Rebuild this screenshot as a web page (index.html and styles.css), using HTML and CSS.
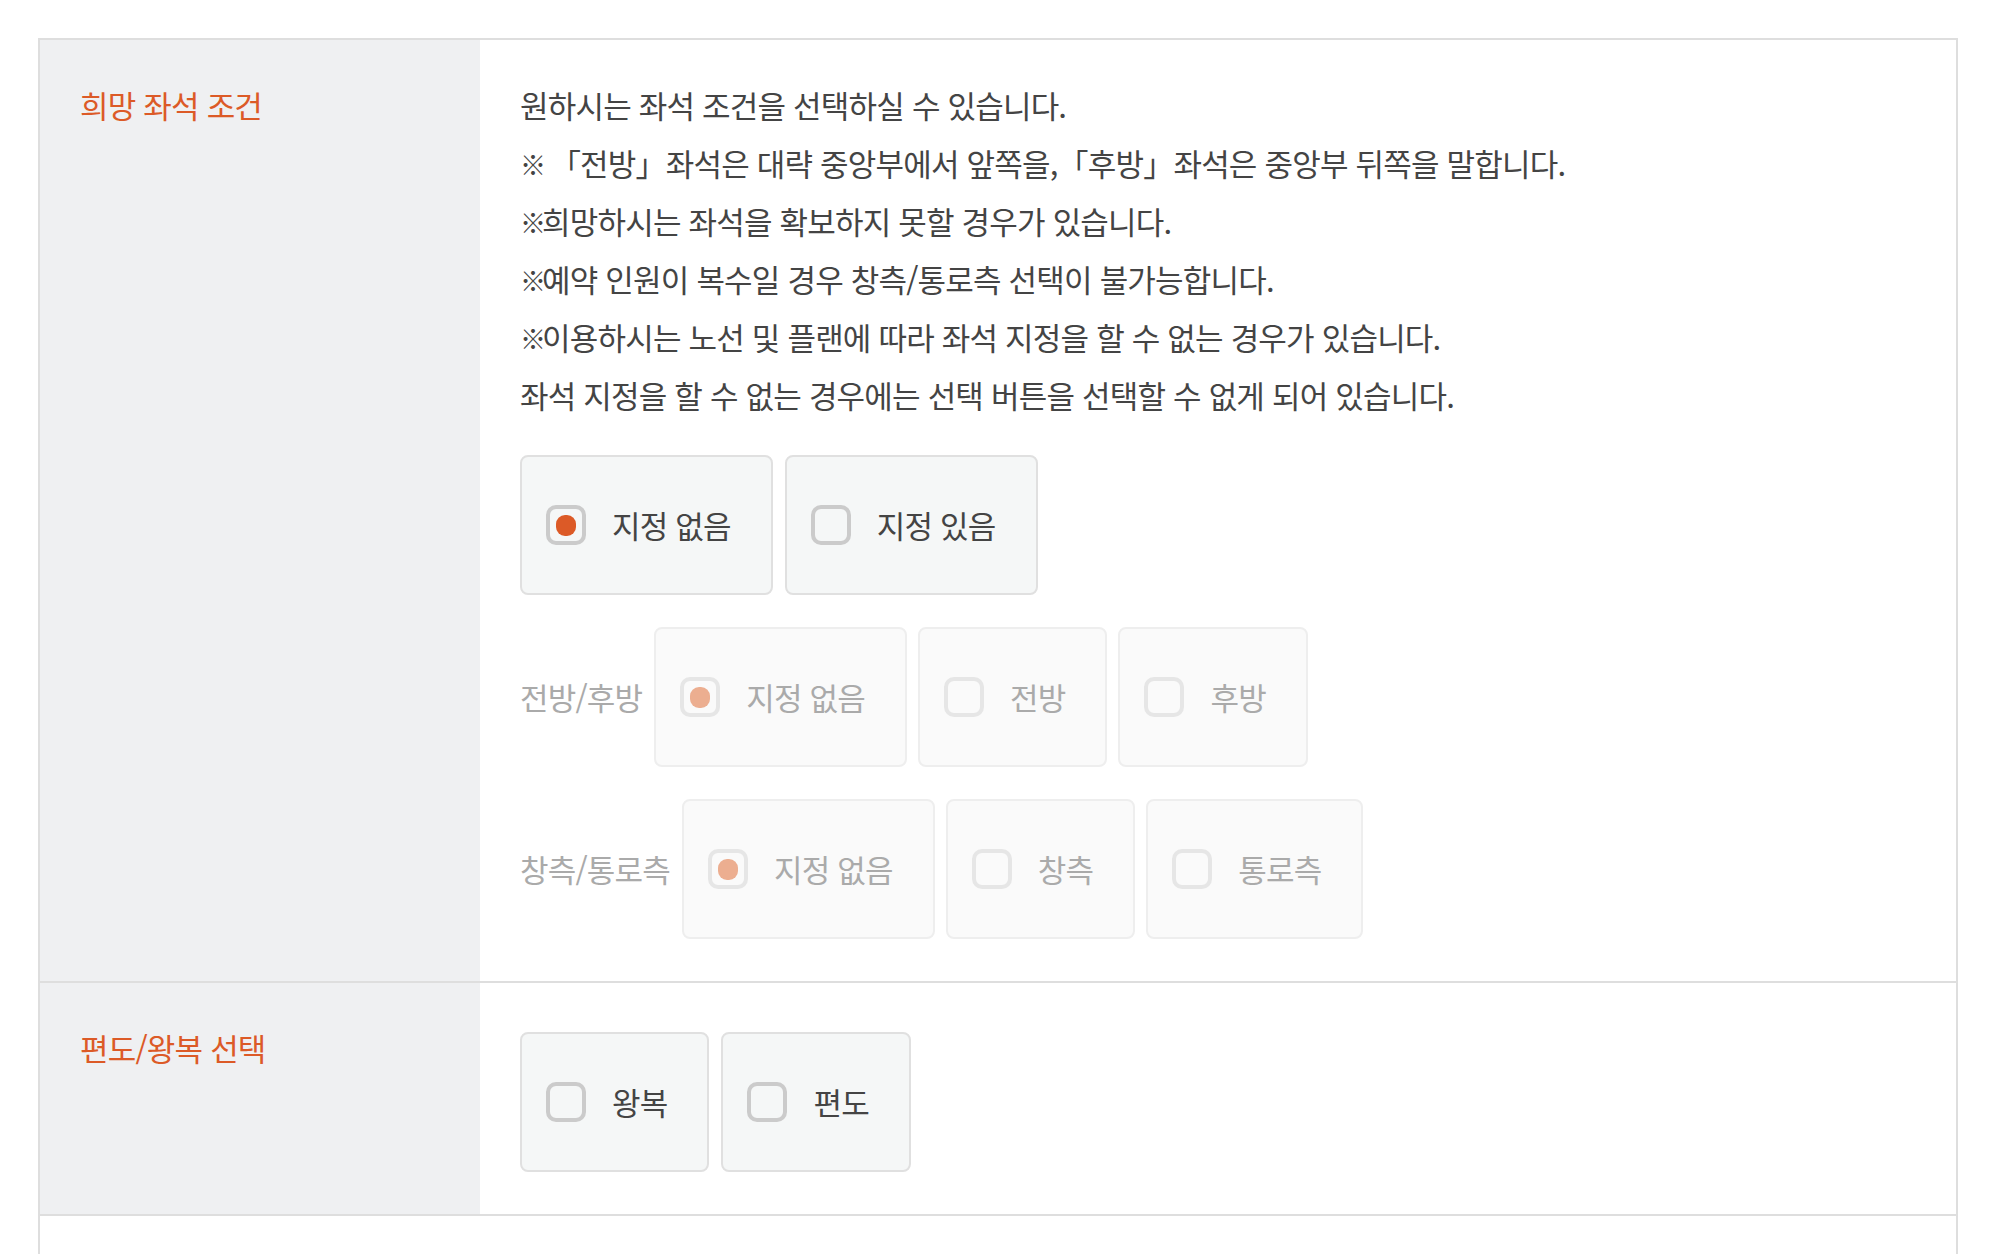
FILE: index.html
```html
<!DOCTYPE html>
<html lang="ko">
<head>
<meta charset="utf-8">
<title>희망 좌석 조건</title>
<link rel="stylesheet" href="styles.css">
</head>
<body>
<div class="table">
  <div class="row">
    <div class="th">희망 좌석 조건</div>
    <div class="td">
      <div class="desc">
        <p>원하시는 좌석 조건을 선택하실 수 있습니다.</p>
        <p><span class="mark">※</span> 「전방」좌석은 대략 중앙부에서 앞쪽을,「후방」좌석은 중앙부 뒤쪽을 말합니다.</p>
        <p><span class="mark">※</span>희망하시는 좌석을 확보하지 못할 경우가 있습니다.</p>
        <p><span class="mark">※</span>예약 인원이 복수일 경우 창측/통로측 선택이 불가능합니다.</p>
        <p><span class="mark">※</span>이용하시는 노선 및 플랜에 따라 좌석 지정을 할 수 없는 경우가 있습니다.</p>
        <p>좌석 지정을 할 수 없는 경우에는 선택 버튼을 선택할 수 없게 되어 있습니다.</p>
      </div>
      <div class="opt-group">
        <div class="opt-line first">
          <div class="opt"><span class="chk on"><span class="dot"></span></span><span class="opt-text">지정 없음</span></div>
          <div class="opt"><span class="chk"></span><span class="opt-text">지정 있음</span></div>
        </div>
        <div class="opt-line disabled">
          <span class="opt-title">전방/후방</span>
          <div class="opt"><span class="chk on"><span class="dot"></span></span><span class="opt-text">지정 없음</span></div>
          <div class="opt"><span class="chk"></span><span class="opt-text">전방</span></div>
          <div class="opt"><span class="chk"></span><span class="opt-text">후방</span></div>
        </div>
        <div class="opt-line disabled">
          <span class="opt-title">창측/통로측</span>
          <div class="opt"><span class="chk on"><span class="dot"></span></span><span class="opt-text">지정 없음</span></div>
          <div class="opt"><span class="chk"></span><span class="opt-text">창측</span></div>
          <div class="opt"><span class="chk"></span><span class="opt-text">통로측</span></div>
        </div>
      </div>
    </div>
  </div>
  <div class="row row-trip">
    <div class="th">편도/왕복 선택</div>
    <div class="td">
      <div class="opt-line first">
        <div class="opt"><span class="chk"></span><span class="opt-text">왕복</span></div>
        <div class="opt"><span class="chk"></span><span class="opt-text">편도</span></div>
      </div>
    </div>
  </div>
  <div class="row row-next"></div>
</div>
</body>
</html>
```
FILE: styles.css
```css
html, body {
  margin: 0;
  padding: 0;
  background: #ffffff;
}

body {
  padding-top: 38px;
  font-family: "Noto Sans CJK KR", "Noto Sans", sans-serif;
  font-size: 31px;
  letter-spacing: -0.8px;
  line-height: 58px;
  color: #444444;
  overflow: hidden;
}

.table {
  width: 1920px;
  margin-left: 38px;
  box-sizing: border-box;
  border: 2px solid #dedede;
  border-bottom: none;
}

.row {
  display: grid;
  grid-template-columns: 440px 1fr;
  border-bottom: 2px solid #dedede;
}

.th {
  background: #eff0f2;
  padding: 36px 40px 0;
  color: #dc5a27;
}

.td {
  padding: 36px 40px 42px;
}

.row-trip .td {
  padding-top: 49px;
}

.row-next {
  height: 120px;
  border-bottom: none;
}

.desc p {
  margin: 0;
  height: 58px;
}

.mark {
  font-size: 26px;
  line-height: 1;
  letter-spacing: -4px;
  font-weight: 700;
  vertical-align: 1px;
}

.opt-group {
  margin-top: 31px;
  display: flex;
  flex-direction: column;
  gap: 32px;
}

.opt-line {
  display: flex;
  align-items: center;
  gap: 11px;
}

.opt-line.first {
  gap: 12px;
}

.opt-title {
  color: #aaaaaa;
  margin-right: 1px;
}

.opt {
  display: flex;
  align-items: center;
  gap: 26px;
  height: 140px;
  box-sizing: border-box;
  padding: 0 40px 0 24px;
  border: 2px solid #e0e0e0;
  border-radius: 8px;
  background: #f5f7f7;
  color: #444444;
}

.chk {
  width: 40px;
  height: 40px;
  box-sizing: border-box;
  border: 4px solid #cbcbcb;
  border-radius: 10px;
  display: flex;
  align-items: center;
  justify-content: center;
  flex-shrink: 0;
}

.dot {
  width: 20px;
  height: 21px;
  border-radius: 9px;
  background: #dc5a27;
}

.disabled .opt {
  background: #fafafa;
  border-color: #eeeeee;
  color: #aaaaaa;
}

.disabled .chk {
  border-color: #e6e6e6;
}

.disabled .dot {
  background: #ecae90;
}
```
